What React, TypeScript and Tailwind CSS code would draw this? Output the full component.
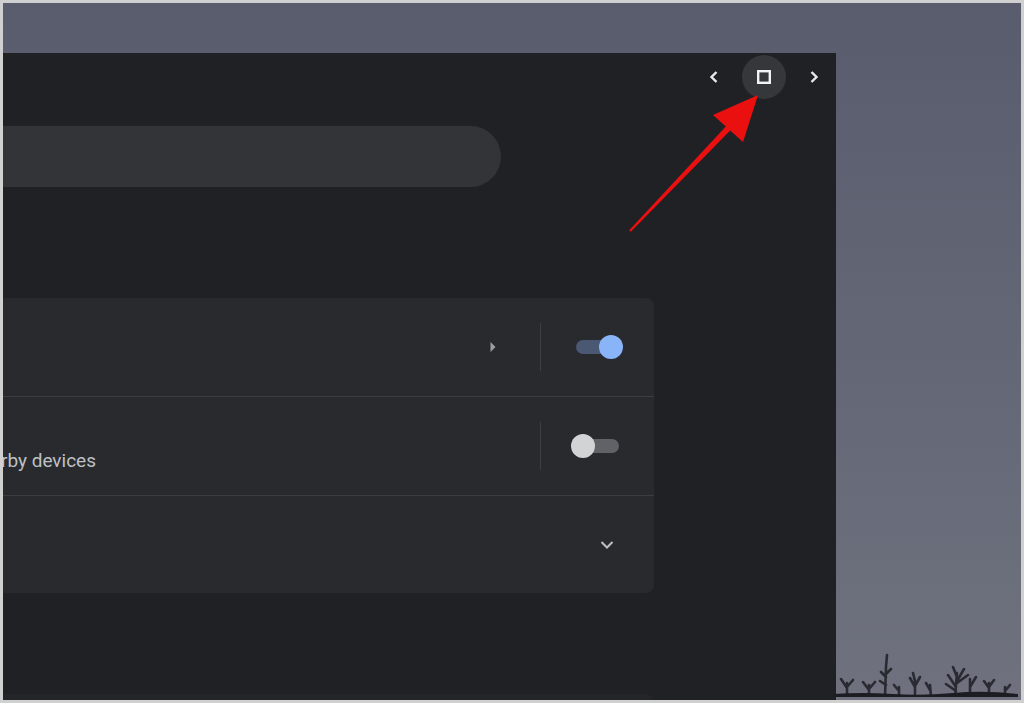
const Toggle = ({ on }: { on: boolean }) => (
  <div className="relative w-[52px] h-[24px] shrink-0">
    {on ? (
      <>
        <div className="absolute left-[5px] top-[5px] w-[44px] h-[14px] rounded-full bg-[#4a5874]" />
        <div className="absolute left-[28px] top-0 w-[24px] h-[24px] rounded-full bg-[#8ab4f8]" />
      </>
    ) : (
      <>
        <div className="absolute left-[12px] top-[5px] w-[36px] h-[14px] rounded-full bg-[#5f6368]" />
        <div className="absolute left-0 top-0 w-[24px] h-[24px] rounded-full bg-[#d2d3d5]" />
      </>
    )}
  </div>
);

const Divider = () => <div className="w-px h-[48px] bg-[#3c4043] shrink-0" />;

// tree silhouettes at the bottom of the wallpaper
const Trees = () => (
  <svg className="absolute right-[3px] bottom-[3px] blur-[0.7px]" width="185" height="50" viewBox="0 0 185 50" fill="none">
    <g stroke="#2a2b32" strokeWidth="2.6" strokeLinecap="round">
      <path d="M14 50 L14 36 M14 41 L8 32 M14 40 L20 33" />
      <path d="M36 50 L36 38 M36 43 L30 35 M36 42 L42 35" />
      <path d="M52 50 L53 20 L54 8 M53 30 L48 25 M53 27 L58 22 M53 38 L47 34" />
      <path d="M66 50 L66 40 M66 44 L61 38" />
      <path d="M82 50 L82 34 M82 40 L77 31 M82 39 L87 30 M82 34 L80 26" />
      <path d="M98 50 L97 38 M97 43 L93 36" />
      <path d="M122 50 L124 26 M123 40 L115 28 M124 34 L131 22 M124 30 L120 20 M123 44 L113 37 M124 36 L135 28" />
      <path d="M137 50 L137 32 M137 40 L143 30" />
      <path d="M156 50 L156 36 M156 41 L151 34 M156 40 L161 33" />
      <path d="M172 50 L172 40 M172 44 L177 38" />
    </g>
    <path d="M0 47 Q30 45 60 47 T120 46 T185 47 L185 50 L0 50 Z" fill="#1c1d22" />
  </svg>
);

export default function App() {
  return (
    <div className="relative w-[1024px] h-[703px] overflow-hidden border-[3px] border-[#d0d0d0] bg-gradient-to-b from-[#585c6d] to-[#6f727e] font-['Roboto',sans-serif]">
      <Trees />
      <div className="mt-[50px] w-[833px] h-[647px] bg-[#202124] flex flex-col overflow-hidden">
        {/* header nav */}
        <div className="flex justify-end gap-[6px] pt-[2px] h-[46px] shrink-0">
          <button className="w-[44px] h-[44px] flex items-center justify-center">
            <svg width="12" height="14" viewBox="0 0 12 14">
              <path d="M8.5 2 L3.5 7 L8.5 12" stroke="#e8eaed" strokeWidth="2.4" fill="none" />
            </svg>
          </button>
          <button className="w-[44px] h-[44px] rounded-full bg-[#36373a] flex items-center justify-center">
            <svg width="16" height="16" viewBox="0 0 16 16">
              <rect x="2.2" y="2.2" width="11.6" height="11.6" stroke="#f1f3f4" strokeWidth="2.4" fill="none" />
            </svg>
          </button>
          <button className="w-[44px] h-[44px] flex items-center justify-center">
            <svg width="12" height="14" viewBox="0 0 12 14">
              <path d="M3.5 2 L8.5 7 L3.5 12" stroke="#e8eaed" strokeWidth="2.4" fill="none" />
            </svg>
          </button>
        </div>

        {/* search bar */}
        <div className="mt-[27px] w-[498px] h-[61px] shrink-0 rounded-r-full bg-[#333437]" />

        {/* settings card */}
        <div className="mt-[111px] w-[651px] shrink-0 rounded-r-lg bg-[#292a2d] overflow-hidden">
          <div className="h-[98px] flex items-center justify-end pr-[31px]">
            <button className="w-[48px] h-[48px] flex items-center justify-center mr-[23px]">
              <svg width="8" height="12" viewBox="0 0 8 12">
                <path d="M1.5 1 L6.5 6 L1.5 11 Z" fill="#9aa0a6" />
              </svg>
            </button>
            <Divider />
            <div className="ml-[30px]">
              <Toggle on />
            </div>
          </div>
          <div className="h-px bg-[#3c3d40]" />
          <div className="h-[98px] flex items-center pr-[31px]">
            <div className="flex-1 self-start pt-[52px] overflow-hidden">
              <p className="ml-[-36px] text-[19px] leading-[24px] text-[#bdc1c6] whitespace-nowrap">Nearby devices</p>
            </div>
            <Divider />
            <div className="ml-[30px]">
              <Toggle on={false} />
            </div>
          </div>
          <div className="h-px bg-[#3c3d40]" />
          <div className="h-[97px] flex items-center justify-end pr-[27px]">
            <button className="w-[40px] h-[40px] flex items-center justify-center">
              <svg width="14" height="10" viewBox="0 0 14 10">
                <path d="M1.5 2 L7 7.5 L12.5 2" stroke="#bdc1c6" strokeWidth="2" fill="none" />
              </svg>
            </button>
          </div>
        </div>

        <div className="mt-[101px] w-[651px] h-[10px] shrink-0 rounded-tr-lg bg-[#242528]" />
      </div>

      {/* red annotation arrow */}
      <svg className="absolute left-[-3px] top-[-3px] pointer-events-none" width="1024" height="703" viewBox="0 0 1024 703">
        <polygon
          points="629.2,230.2 725.8,126.5 713,115 758,95 743,142 730.2,130.5 630.8,231.8"
          fill="#ea1010"
        />
      </svg>
    </div>
  );
}
